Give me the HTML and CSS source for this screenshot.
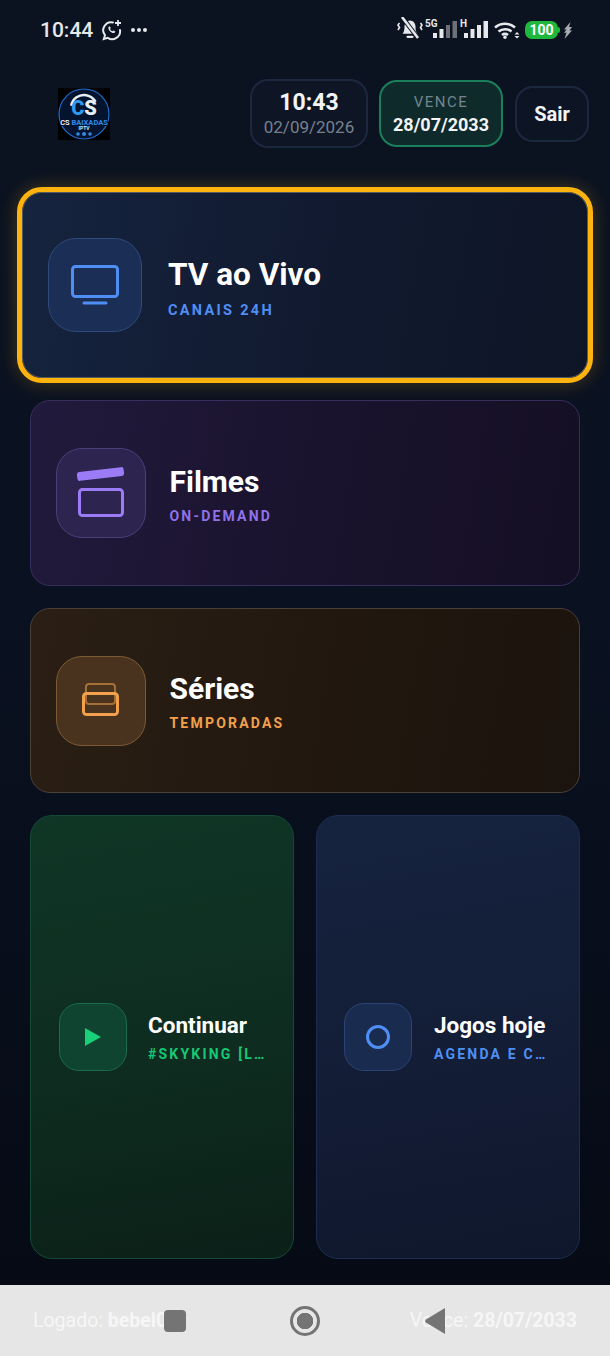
FILE: index.html
```html
<!DOCTYPE html>
<html lang="pt-BR">
<head>
    <meta charset="UTF-8">
    <meta name="viewport" content="width=device-width, initial-scale=1.0">
    <title>CS Baixadas IPTV</title>
    <link rel="stylesheet" href="styles.css">
</head>
<body>
    <div class="app">
        <div class="status-bar">
            <div class="status-left">
                <span class="status-time">10:44</span>
                <svg class="status-wa" width="22" height="22" viewBox="0 0 22 22" fill="none" stroke="#e6e8ec" stroke-width="2">
                    <path d="M12 3.400A8 8 0 0 0 4 16.200L2.800 20l4-1.100A8 8 0 0 0 19 11" stroke-linecap="round"/>
                    <path d="M8 7.600c-1.200 1-.6 3 1 4.700 1.700 1.700 3.700 2.400 4.800 1.200l.6-.9-2.200-1.200-.9.8c-1-.4-1.800-1.200-2.300-2.300l.8-.9L8.800 7.400z" fill="#e6e8ec" stroke="none"/>
                    <path d="M17 1v6M14 4h6" stroke-width="1.800"/>
                </svg>
                <span class="status-dots"><i></i><i></i><i></i></span>
            </div>
            <div class="status-right">
                <svg class="status-bell" width="26" height="22" viewBox="0 0 26 22" fill="none" stroke="#e6e8ec">
                    <path d="M5.500 16.800c1.800-2 2-4.800 2-7.300 0-3.200 2.400-6 5.500-6s5.500 2.800 5.500 6c0 2.500.2 5.300 2 7.300z" fill="#e6e8ec" stroke="none"/>
                    <path d="M10.500 19.800h5" stroke-width="2.200" stroke-linecap="round"/>
                    <path d="M5 0l16 21" stroke="#0b1321" stroke-width="4.500"/>
                    <path d="M5 0l16 21" stroke-width="2.600"/>
                    <path d="M2.500 6L1 8l1.500 2.500L1 13M23.500 6L25 8l-1.500 2.500L25 13" stroke-width="1.600"/>
                </svg>
                <span class="signal signal-5g">
                    <b class="signal-label">5G</b>
                    <svg width="24" height="17" viewBox="0 0 24 17" fill="#e6e8ec">
                        <rect y="12" width="4" height="5"/><rect x="6.500" y="8" width="4" height="9"/>
                        <rect x="13" y="4" width="4" height="13" fill="#6d7078"/><rect x="19.500" width="4.500" height="17" fill="#6d7078"/>
                    </svg>
                </span>
                <span class="signal signal-h">
                    <b class="signal-label">H</b>
                    <svg width="24" height="17" viewBox="0 0 24 17" fill="#e6e8ec">
                        <rect y="12" width="4" height="5"/><rect x="6.500" y="8" width="4" height="9"/>
                        <rect x="13" y="4" width="4" height="13"/><rect x="19.500" width="4.500" height="17"/>
                    </svg>
                </span>
                <svg class="status-wifi" width="26" height="17" viewBox="0 0 26 17" fill="none" stroke="#e6e8ec" stroke-width="2.600">
                    <path d="M1 5.500C7 .5 15 .5 21 5.500"/>
                    <path d="M4.500 9.500c3.800-3 9.200-3 13 0"/>
                    <path d="M8 13c1.800-1.400 4.200-1.400 6 0"/>
                    <circle cx="11" cy="15.300" r="1.700" fill="#e6e8ec" stroke="none"/>
                    <path d="M20.500 12.500l2.500-2.500 2.500 2.500zM20.500 14l2.500 2.500 2.500-2.500z" fill="#e6e8ec" stroke="none"/>
                </svg>
                <span class="battery">100</span>
                <svg class="status-bolt" width="10" height="17" viewBox="0 0 10 17" fill="#a9acb2">
                    <path d="M7.500 0L1 7.500h2.500L1 11l2.500-.5L1.500 17 9 8.500H6.500L9 5H6z"/>
                </svg>
            </div>
        </div>

        <header class="top-bar">
            <svg class="logo" width="52" height="52" viewBox="0 0 52 52">
                <rect width="52" height="52" fill="#000"/>
                <circle cx="26" cy="26" r="25" fill="#04142e" stroke="#1f6fd0" stroke-width="1.200"/>
                <circle cx="26" cy="20" r="13" fill="none" stroke="#e8eef6" stroke-width="2.500" stroke-dasharray="32 50" transform="rotate(190 26 20)"/>
                <text x="26" y="27" text-anchor="middle" class="logo-cs"><tspan fill="#2f9bf0">C</tspan><tspan fill="#e8eef6">S</tspan></text>
                <rect x="2" y="30" width="48" height="8" fill="#04142e"/>
                <text x="26" y="36.500" text-anchor="middle" class="logo-name"><tspan fill="#e8eef6">CS </tspan><tspan fill="#2f8be8">BAIXADAS</tspan></text>
                <text x="26" y="42" text-anchor="middle" class="logo-sub">IPTV</text>
                <circle cx="20" cy="46" r="1.800" fill="#2f8be8"/><circle cx="26" cy="46" r="2" fill="#2f8be8"/><circle cx="32" cy="46" r="1.800" fill="#2f8be8"/>
            </svg>
            <div class="pill pill-clock">
                <strong>10:43</strong>
                <span>02/09/2026</span>
            </div>
            <div class="pill pill-expire">
                <span>VENCE</span>
                <strong>28/07/2033</strong>
            </div>
            <div class="pill pill-exit">Sair</div>
        </header>

        <main class="menu">
            <a class="card card-tv focused">
                <span class="card-icon">
                    <svg width="52" height="46" viewBox="0 0 52 46" fill="none" stroke="#4f8ff5" stroke-width="3">
                        <rect x="3.500" y="4.500" width="45" height="30" rx="3"/>
                        <path d="M15 41h22" stroke-linecap="round"/>
                    </svg>
                </span>
                <span class="card-text">
                    <span class="card-title">TV ao Vivo</span>
                    <span class="card-sub">CANAIS 24H</span>
                </span>
            </a>
            <a class="card card-movies">
                <span class="card-icon">
                    <svg width="50" height="52" viewBox="0 0 50 52" fill="none" stroke="#9b7cf6" stroke-width="3">
                        <rect x="1" y="2.500" width="47" height="9" rx="2.500" fill="#9b7cf6" stroke="none" transform="rotate(-6.500 24.500 7)"/>
                        <rect x="3.500" y="22.500" width="43" height="26" rx="3"/>
                    </svg>
                </span>
                <span class="card-text">
                    <span class="card-title">Filmes</span>
                    <span class="card-sub">ON-DEMAND</span>
                </span>
            </a>
            <a class="card card-series">
                <span class="card-icon">
                    <svg width="40" height="36" viewBox="0 0 40 36" fill="none" stroke="#f2a04c" stroke-width="3">
                        <rect x="5" y="1" width="29" height="20" rx="3" stroke-width="2" opacity="0.55"/>
                        <rect x="2.500" y="10.500" width="34" height="21" rx="3"/>
                    </svg>
                </span>
                <span class="card-text">
                    <span class="card-title">Séries</span>
                    <span class="card-sub">TEMPORADAS</span>
                </span>
            </a>
            <div class="menu-row">
                <a class="card card-small card-continue">
                    <span class="card-icon">
                        <svg width="16" height="18" viewBox="0 0 16 18"><path d="M0 0l16 9-16 9z" fill="#17d078"/></svg>
                    </span>
                    <span class="card-text">
                        <span class="card-title">Continuar</span>
                        <span class="card-sub">#SKYKING [L…</span>
                    </span>
                </a>
                <a class="card card-small card-games">
                    <span class="card-icon">
                        <svg width="26" height="26" viewBox="0 0 26 26" fill="none" stroke="#4f8ff5" stroke-width="3"><circle cx="13" cy="13" r="10.500"/></svg>
                    </span>
                    <span class="card-text">
                        <span class="card-title">Jogos hoje</span>
                        <span class="card-sub">AGENDA E C…</span>
                    </span>
                </a>
            </div>
        </main>

        <footer class="nav-bar">
            <span class="foot-text">Logado: <b>bebel02</b></span>
            <span class="foot-text">Vence: <b>28/07/2033</b></span>
            <span class="nav-btn nav-square"></span>
            <span class="nav-btn nav-home"></span>
            <svg class="nav-btn nav-back" width="20" height="26" viewBox="0 0 20 26"><path d="M20 0v26L1 14.500a2 2 0 0 1 0-3z" fill="#747474"/></svg>
        </footer>
    </div>
</body>
</html>
```

FILE: styles.css
```css
* {
    box-sizing: border-box;
}

body {
    margin: 0;
    font-family: Roboto, "Liberation Sans", sans-serif;
    background: #0b1220;
}

.app {
    position: relative;
    width: 610px;
    height: 1356px;
    display: flex;
    flex-direction: column;
    background: linear-gradient(180deg, #0b1321 0%, #0a1120 45%, #050a14 100%);
    overflow: hidden;
}

/* status bar */
.status-bar {
    height: 60px;
    padding: 0 37px 0 40px;
    display: flex;
    justify-content: space-between;
    align-items: center;
    color: #e6e8ec;
}

.status-left {
    display: flex;
    align-items: center;
}

.status-right {
    height: 22px;
    margin-bottom: 4px;
    display: flex;
    align-items: flex-end;
}

.status-time {
    font-size: 21px;
    font-weight: 500;
}

.status-wa {
    margin-left: 8px;
}

.status-dots {
    display: flex;
    gap: 2px;
    margin-left: 8px;
}

.status-dots i {
    width: 4px;
    height: 4px;
    border-radius: 50%;
    background: #e6e8ec;
}

.signal {
    position: relative;
    display: block;
    height: 18px;
    padding-bottom: 1px;
    text-align: right;
}

.signal svg {
    display: block;
    margin-left: auto;
}

.signal-5g {
    width: 32px;
    margin-left: 2px;
}

.signal-h {
    width: 28px;
    margin-left: 3px;
}

.signal-label {
    position: absolute;
    left: 0;
    top: -3px;
    font-size: 10px;
    line-height: 11px;
    font-weight: 700;
}

.status-wifi {
    margin-left: 6px;
}

.battery {
    position: relative;
    width: 33px;
    height: 18px;
    margin-left: 5px;
    border-radius: 7px;
    background: #20b83c;
    color: #fff;
    font-size: 14px;
    font-weight: 700;
    line-height: 18px;
    text-align: center;
}

.battery::after {
    content: "";
    position: absolute;
    right: -2px;
    top: 6px;
    width: 2px;
    height: 6px;
    border-radius: 0 2px 2px 0;
    background: #20b83c;
}

.status-bolt {
    margin-left: 5px;
}

/* header */
.top-bar {
    height: 69px;
    margin-top: 19px;
    padding: 0 21px 0 58px;
    display: flex;
    align-items: center;
}

.logo {
    margin-right: auto;
}

.logo-cs {
    font: 900 20px Roboto, sans-serif;
}

.logo-name {
    font: 700 7.500px Roboto, sans-serif;
}

.logo-sub {
    font: 700 5px Roboto, sans-serif;
    fill: #d4e4f8;
}

.pill {
    display: flex;
    flex-direction: column;
    align-items: center;
    justify-content: center;
    border: 2px solid #1c2740;
    border-radius: 18px;
    background: #0e1626;
}

.pill-clock {
    width: 118px;
    height: 69px;
    color: #f2f4f7;
}

.pill-clock strong {
    font-size: 23px;
    line-height: 27px;
    font-weight: 700;
}

.pill-clock span {
    font-size: 17px;
    line-height: 22px;
    color: #77808f;
}

.pill-expire {
    width: 124px;
    height: 67px;
    margin-left: 11px;
    border-color: #1b7f5b;
    background: #0f2a2a;
}

.pill-expire span {
    font-size: 15px;
    line-height: 22px;
    letter-spacing: 1.500px;
    color: #72858f;
}

.pill-expire strong {
    font-size: 18px;
    line-height: 24px;
    font-weight: 700;
    color: #f2f4f7;
}

.pill-exit {
    width: 74px;
    height: 56px;
    margin-left: 12px;
    font-size: 20px;
    font-weight: 700;
    color: #f2f4f7;
    background: #0d1424;
}

/* menu cards */
.menu {
    flex: 1;
    margin-top: 44px;
    padding: 0 30px 26px;
    display: flex;
    flex-direction: column;
    gap: 22px;
}

.card {
    height: 186px;
    padding: 0 24.500px;
    display: flex;
    align-items: center;
    border: 1.500px solid;
    border-radius: 20px;
}

.card-icon {
    flex: none;
    width: 90px;
    height: 90px;
    display: flex;
    align-items: center;
    justify-content: center;
    border: 1.500px solid;
    border-radius: 26px;
}

.card-text {
    min-width: 0;
    margin-left: 24px;
    padding-top: 2px;
    display: flex;
    flex-direction: column;
}

.card-title {
    font-size: 30px;
    line-height: 38px;
    font-weight: 700;
    color: #fff;
}

.card-sub {
    margin-top: 6px;
    font-size: 14px;
    line-height: 18px;
    font-weight: 700;
    letter-spacing: 2.200px;
    white-space: nowrap;
}

.card-tv {
    background: linear-gradient(100deg, #16243f 0%, #111a30 50%, #0e1526 100%);
    border-color: #555a60;
}

.card-tv .card-icon {
    background: #1b2e55;
    border-color: #304a7c;
}

.card-tv .card-sub {
    color: #4f8ff5;
}

.focused {
    margin: 0 -8px;
    padding: 0 25px;
    outline: 5px solid #ffb30f;
    box-shadow: 0 0 18px 6px rgba(255, 179, 15, 0.22);
}

.focused .card-icon {
    width: 94px;
    height: 94px;
    border-radius: 28px;
}

.focused .card-text {
    margin-left: 26px;
    padding-top: 6px;
}

.focused .card-title {
    font-size: 31.500px;
}

.focused .card-sub {
    margin-top: 8px;
    font-size: 14.500px;
    letter-spacing: 2.300px;
}

.card-movies {
    background: linear-gradient(100deg, #221a3c 0%, #1a132e 50%, #150f24 100%);
    border-color: #362e5c;
}

.card-movies .card-icon {
    background: #2e2450;
    border-color: #4b3f78;
}

.card-movies .card-sub {
    color: #8f72ea;
}

.card-series {
    height: 185px;
    background: linear-gradient(100deg, #2b1f15 0%, #22180f 50%, #1b130d 100%);
    border-color: #4b4038;
}

.card-series .card-icon {
    background: #49331f;
    border-color: #7c5a34;
}

.card-series .card-text {
    padding-top: 0;
}

.card-series .card-sub {
    color: #f2a04c;
}

.menu-row {
    flex: 1;
    display: grid;
    grid-template-columns: 1fr 1fr;
    gap: 22px;
}

.card-small {
    min-width: 0;
    height: auto;
    padding: 0 27px;
    border-radius: 22px;
}

.card-small .card-icon {
    width: 68px;
    height: 68px;
    border-radius: 20px;
}

.card-small .card-text {
    margin-left: 22px;
    padding-top: 0;
    padding-bottom: 1px;
}

.card-small .card-title {
    font-size: 22.500px;
    line-height: 30px;
}

.card-small .card-sub {
    margin-top: 5px;
}

.card-continue {
    padding-left: 28px;
    background: linear-gradient(170deg, #0f3626 0%, #0e2c20 55%, #0b2018 100%);
    border-color: #124a35;
}

.card-continue .card-icon {
    background: #0e4430;
    border-color: #1c6b4a;
}

.card-continue .card-text {
    margin-left: 21px;
}

.card-continue .card-sub {
    color: #17c774;
}

.card-games {
    background: linear-gradient(170deg, #16233f 0%, #131d36 55%, #0f172c 100%);
    border-color: #1d2c50;
}

.card-games .card-icon {
    background: #1a2b50;
    border-color: #2c4474;
}

.card-games .card-sub {
    color: #4f8ff5;
}

/* android nav bar, buttons lie over the app's footer text */
.nav-bar {
    position: relative;
    height: 71px;
    padding: 0 33px;
    display: flex;
    justify-content: space-between;
    align-items: center;
    background: #e6e6e6;
}

.foot-text {
    font-size: 19.500px;
    color: #f6f6f6;
}

.nav-btn {
    position: absolute;
}

.nav-square {
    left: 164px;
    top: 25px;
    width: 22px;
    height: 22px;
    border-radius: 4px;
    background: #747474;
}

.nav-home {
    left: 290px;
    top: 21px;
    width: 30px;
    height: 30px;
    border: 3px solid #747474;
    border-radius: 50%;
    background: radial-gradient(circle, #747474 0 8px, #e6e6e6 8.500px);
}

.nav-back {
    left: 425px;
    top: 23px;
}
```
